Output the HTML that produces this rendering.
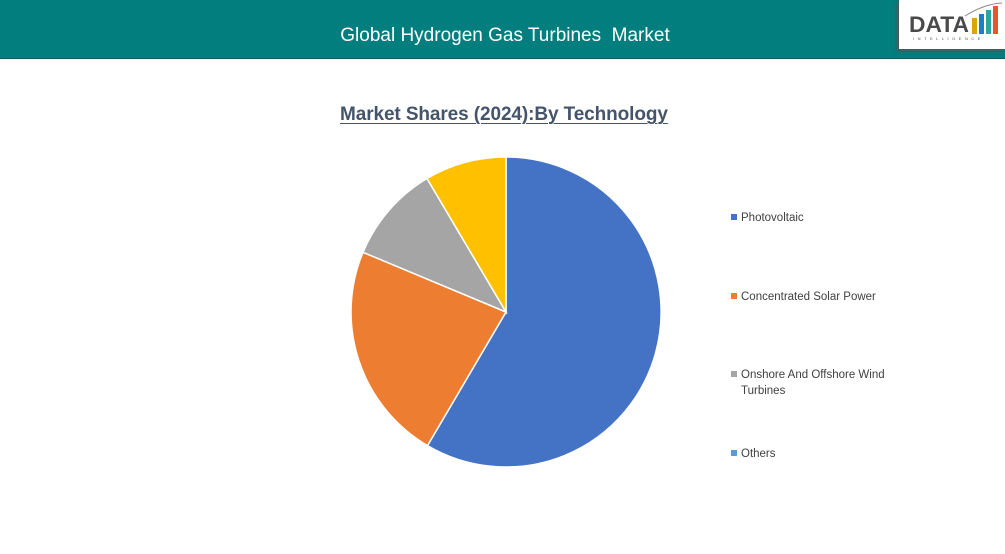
<!DOCTYPE html>
<html><head><meta charset="utf-8"><style>
body{margin:0;width:1005px;height:554px;background:#fff;position:relative;overflow:hidden;font-family:"Liberation Sans",sans-serif}
.hdr{position:absolute;left:0;top:0;width:1005px;height:58px;background:#037e7e;border-bottom:1px solid #0b5d5d}
.hdr .t{position:absolute;left:0;width:1010px;top:25px;text-align:center;color:#fff;font-size:19px}
.logo{position:absolute;left:899px;top:0;width:106px;height:49px;background:#fff;box-shadow:-2px 2px 3px #555}
.ttl{position:absolute;left:340px;top:104px;font-size:19px;letter-spacing:-0.1px;font-weight:bold;color:#44546a;text-decoration:underline;text-decoration-thickness:1px;text-underline-offset:3px}
.lg{position:absolute;left:731px;font-size:11.5px;color:#404040;line-height:16px}
.lg i{display:inline-block;width:6px;height:6px;margin-right:4px;vertical-align:1px}
</style></head><body>
<div class="hdr"><div class="t">Global Hydrogen Gas Turbines&nbsp; Market</div></div>
<div class="logo"><svg width="106" height="49">
<text x="10" y="32" font-family="Liberation Sans" font-weight="bold" font-size="22" fill="#4a4a4a" textLength="60" lengthAdjust="spacingAndGlyphs">DATA</text>
<rect x="73" y="18" width="5" height="16" fill="#d9a800"/><rect x="80" y="14" width="5" height="20" fill="#1f7fbf"/><rect x="87" y="10" width="5" height="24" fill="#2aa5a0"/><rect x="94" y="6" width="5" height="28" fill="#e8562a"/>
<path d="M66 16 Q85 4 103 3" stroke="#888" fill="none" stroke-width="1"/>
<text x="14" y="40" font-size="4" fill="#555" letter-spacing="3.5">INTELLIGENCE</text></svg></div>
<div class="ttl">Market Shares (2024):By Technology</div>
<svg style="position:absolute;left:0;top:0" width="1005" height="554">
<g stroke="#fff" stroke-width="1.5">
<path d="M506 312 L506 157 A155 155 0 1 1 427.5 445.6 Z" fill="#4472c4"/>
<path d="M506 312 L427.5 445.6 A155 155 0 0 1 363 252.3 Z" fill="#ed7d31"/>
<path d="M506 312 L363 252.3 A155 155 0 0 1 427 178.5 Z" fill="#a5a5a5"/>
<path d="M506 312 L427 178.5 A155 155 0 0 1 506 157 Z" fill="#ffc000"/>
</g></svg>
<div class="lg" style="top:210px"><i style="background:#4472c4"></i>Photovoltaic</div>
<div class="lg" style="top:289px"><i style="background:#ed7d31"></i>Concentrated Solar Power</div>
<div class="lg" style="top:367px"><i style="background:#a5a5a5"></i>Onshore And Offshore Wind<br><span style="padding-left:10px">Turbines</span></div>
<div class="lg" style="top:446px"><i style="background:#5b9bd5"></i>Others</div>
</body></html>
